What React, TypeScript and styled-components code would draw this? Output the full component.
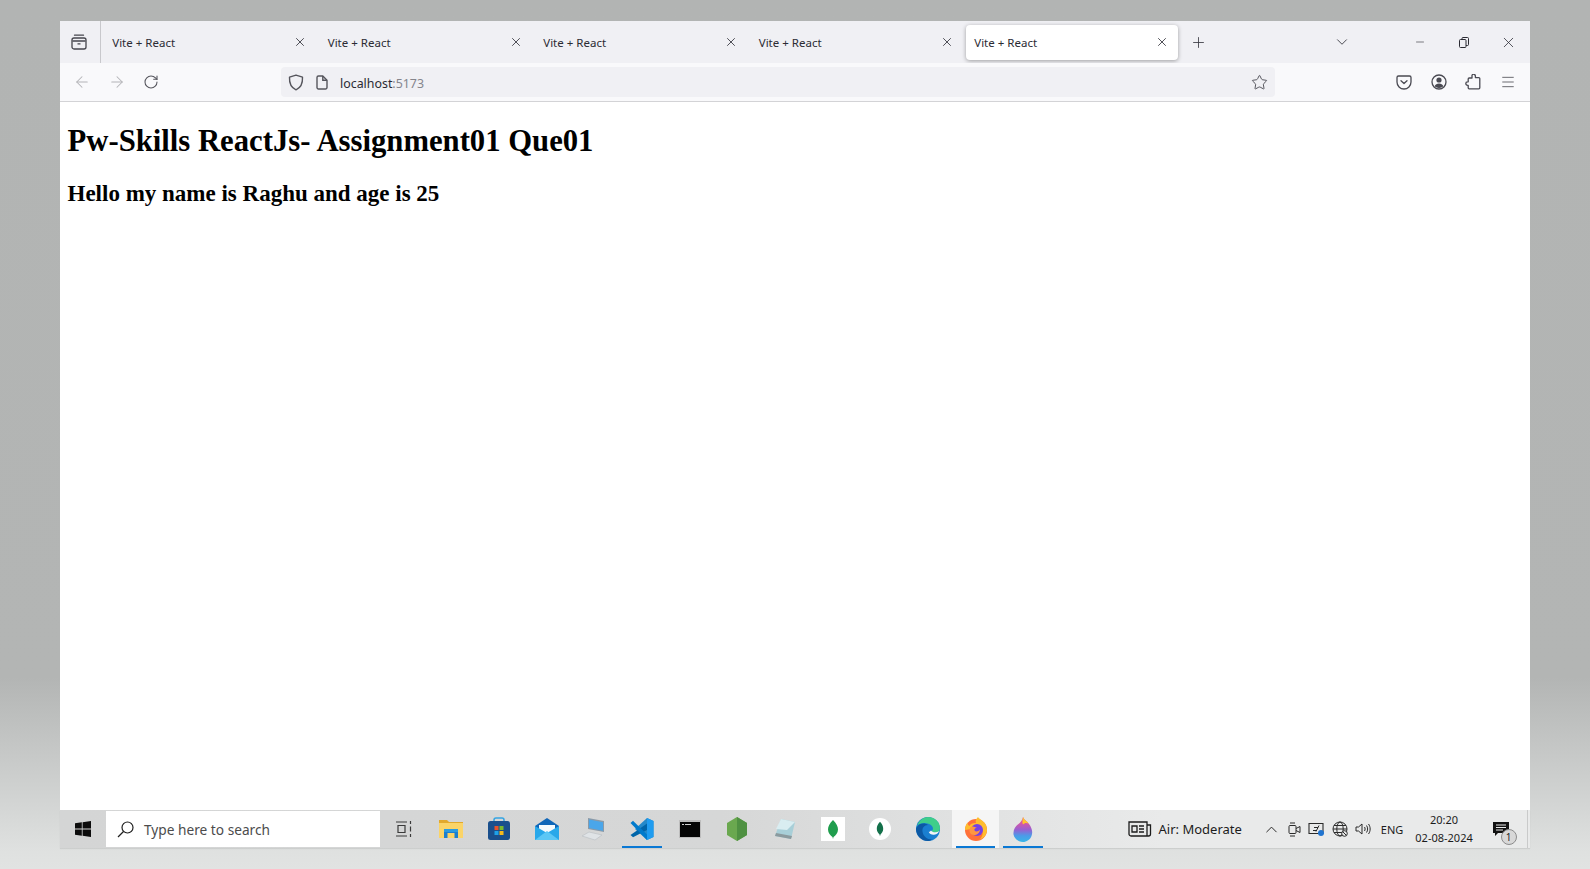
import React from "react";
import styled, { createGlobalStyle } from "styled-components";
import {
  ArrowLeft,
  ArrowRight,
  ChevronDown,
  ChevronUp,
  Menu,
  Minus,
  Plus,
  RotateCw,
  Star,
  X
} from "lucide-react";

const GlobalStyle = createGlobalStyle`
  html, body {
    margin: 0;
    height: 869px;
    overflow: hidden;
  }
  body {
    background: linear-gradient(180deg, #b2b4b3 0%, #b3b5b4 78%, #dfe1e0 98%, #e1e3e2 100%);
    font-family: "Noto Sans", "Open Sans", sans-serif;
  }
`;

const TABS = ["Vite + React", "Vite + React", "Vite + React", "Vite + React", "Vite + React"];

function ArchiveIcon() {
  return (
    <svg width="16" height="16" viewBox="0 0 16 16" fill="none" stroke="#45454d" strokeWidth="1.3">
      <path d="M3.5 1.2h9" strokeLinecap="round" />
      <rect x="1" y="4" width="14" height="11" rx="2" />
      <path d="M1.5 7h13M6.5 9.8h3" />
    </svg>
  );
}

function ShieldIcon() {
  return (
    <svg width="16" height="17" viewBox="0 0 16 17" fill="none" stroke="#55555c" strokeWidth="1.4">
      <path d="M8 1.2 L14.5 3.2 C14.8 9 13 13.5 8 15.8 C3 13.5 1.2 9 1.5 3.2 Z" strokeLinejoin="round" />
    </svg>
  );
}

function PageIcon() {
  return (
    <svg width="14" height="15" viewBox="0 0 14 15" fill="none" stroke="#55555c" strokeWidth="1.4">
      <path d="M2 2.5a1.5 1.5 0 0 1 1.5-1.5h4.3L12 5.2v7.3a1.5 1.5 0 0 1-1.5 1.5h-7A1.5 1.5 0 0 1 2 12.5z" strokeLinejoin="round" />
      <path d="M7.8 1v4.2H12" />
    </svg>
  );
}

function PocketIcon() {
  return (
    <svg width="16" height="16" viewBox="0 0 16 16" fill="none" stroke="#4a4a52" strokeWidth="1.3">
      <path d="M2.5 2h11A1.5 1.5 0 0 1 15 3.5V8A7 7 0 0 1 1 8V3.5A1.5 1.5 0 0 1 2.5 2z" />
      <path d="M5 6.8 8 9.6l3-2.8" strokeLinecap="round" strokeLinejoin="round" />
    </svg>
  );
}

function ProfileIcon() {
  return (
    <svg width="16" height="16" viewBox="0 0 16 16" fill="none">
      <circle cx="8" cy="8" r="7" stroke="#4a4a52" strokeWidth="1.3" />
      <circle cx="8" cy="6" r="2.6" fill="#4a4a52" />
      <path d="M3.6 12.2c.8-2 2.4-2.8 4.4-2.8s3.6.8 4.4 2.8A6 6 0 0 1 8 14a6 6 0 0 1-4.4-1.8z" fill="#4a4a52" />
    </svg>
  );
}

function ExtensionIcon() {
  return (
    <svg width="16" height="16" viewBox="0 0 16 16" fill="none" stroke="#4a4a52" strokeWidth="1.3" strokeLinejoin="round">
      <path d="M7 1.2a1.8 1.8 0 0 1 3.4.8v1.6h3.4a1 1 0 0 1 1 1v9.2a1 1 0 0 1-1 1H4.2a1 1 0 0 1-1-1v-2.4H2.6a1.8 1.8 0 0 1 0-3.6h.6V5a1 1 0 0 1 1-1H7z" />
    </svg>
  );
}

function RestoreIcon() {
  return (
    <svg width="10" height="11" viewBox="0 0 10 11" fill="none" stroke="#2b2b33" strokeWidth="1">
      <rect x="0.5" y="2.5" width="6.5" height="8" rx="1" />
      <path d="M3 2.5v-1a1 1 0 0 1 1-1h4.5a1 1 0 0 1 1 1v6a1 1 0 0 1-1 1H7" />
    </svg>
  );
}

function WindowsLogo() {
  return (
    <svg width="16" height="16" viewBox="0 0 16 16" fill="#0c0c0c">
      <path d="M0 2.3 6.8 1.3v6.3H0zM7.6 1.2 16 0v7.6H7.6zM0 8.4h6.8v6.3L0 13.7zM7.6 8.4H16V16l-8.4-1.2z" />
    </svg>
  );
}

function SearchGlass() {
  return (
    <svg width="17" height="17" viewBox="0 0 17 17" fill="none" stroke="#1f1f1f" strokeWidth="1.2">
      <circle cx="10.5" cy="6.5" r="5.5" />
      <path d="M6.5 10.5 1 16" />
    </svg>
  );
}

function TaskViewIcon() {
  return (
    <svg width="17" height="16" viewBox="0 0 17 16" fill="none" stroke="#3a3a3a" strokeWidth="1.2">
      <path d="M1 1h11M1 15h11M3 4.5h7v7H3zM15.5 0v3M15.5 5.5v5M15.5 13v3" />
    </svg>
  );
}

function FolderIcon() {
  return (
    <svg width="24" height="22" viewBox="0 0 24 22">
      <path d="M0 2h8l2 2h14v2H0z" fill="#e2a92d" />
      <path d="M0 5h24v15H0z" fill="#fbd468" />
      <path d="M5 11h14v9h-3.5v-5h-7v5H5z" fill="#1b7fcf" />
      <path d="M5 11h14v3H5z" fill="#2a9be0" />
    </svg>
  );
}

function StoreIcon() {
  return (
    <svg width="24" height="24" viewBox="0 0 24 24">
      <path d="M7 5V3a2 2 0 0 1 2-2h6a2 2 0 0 1 2 2v2" stroke="#35a5e3" strokeWidth="1.5" fill="none" />
      <rect x="1" y="4" width="22" height="19" rx="2.5" fill="#1a4f8c" />
      <rect x="7.5" y="9" width="4" height="4" fill="#e8532a" />
      <rect x="12.5" y="9" width="4" height="4" fill="#7ab92d" />
      <rect x="7.5" y="14" width="4" height="4" fill="#1ea1e8" />
      <rect x="12.5" y="14" width="4" height="4" fill="#f7b91b" />
    </svg>
  );
}

function MailIcon() {
  return (
    <svg width="24" height="22" viewBox="0 0 24 22">
      <path d="M0 8 12 0l12 8v14H0z" fill="#0f66b8" />
      <path d="M4 7h16v8H4z" fill="#f5fafd" />
      <path d="M0 8l12 7 12-7v14H0z" fill="#28a8ea" />
      <path d="M0 22 12 13l12 9z" fill="#5cc7f5" />
    </svg>
  );
}

function ComputerIcon() {
  return (
    <svg width="24" height="24" viewBox="0 0 24 24">
      <path d="M6 1l16 3v11L6 12z" fill="#8a9aa8" />
      <path d="M7 2.5l14 2.7v8.5L7 11z" fill="#4aa6ea" />
      <path d="M0 19l7-4 13 3-7 5z" fill="#dfe3e6" stroke="#b9bec2" strokeWidth="0.6" />
    </svg>
  );
}

function CodeIcon() {
  return (
    <svg width="24" height="24" viewBox="0 0 24 24">
      <path d="M17 1 23.5 4v16L17 23 5 12z" fill="#2489ca" />
      <path d="M17 1v22l6.5-3V4z" fill="#1f9cf0" />
      <path d="M17 6.5 0.5 18 3 20.2 17 13z" fill="#0065a9" />
      <path d="M0.5 6 3 3.8 17 17.5V23z" fill="#007acc" />
    </svg>
  );
}

function TerminalIcon() {
  return (
    <svg width="22" height="18" viewBox="0 0 22 18">
      <rect x="0" y="0" width="22" height="18" fill="#bdbdbd" />
      <rect x="1" y="2" width="20" height="15" fill="#050505" />
      <path d="M3 4h2v1H3zM6 4h6v1H6z" fill="#cfcfcf" />
    </svg>
  );
}

function NodeIcon() {
  return (
    <svg width="22" height="24" viewBox="0 0 22 24">
      <path d="M11 0 21 6v12l-10 6L1 18V6z" fill="#6aa84f" />
      <path d="M11 0 21 6v12l-10 6z" fill="#4f9142" />
    </svg>
  );
}

function PaperIcon() {
  return (
    <svg width="24" height="24" viewBox="0 0 24 24">
      <path d="M8 2 22 5 18 22 2 19z" fill="#a8cfd8" />
      <path d="M8 2 22 5 14 13 3 12z" fill="#d9edf1" />
      <path d="M2 19l16 3 1-3-16-3z" fill="#8b9a9e" />
    </svg>
  );
}

function MongoSquareIcon() {
  return (
    <svg width="24" height="24" viewBox="0 0 24 24">
      <rect width="24" height="24" fill="#fff" />
      <path d="M12 3c3.5 3.5 5 6.5 5 9.5 0 3.5-2.5 6-4.5 7.5L12 22l-.5-2C9.5 18.5 7 16 7 12.5 7 9.5 8.5 6.5 12 3z" fill="#1f9d4d" />
    </svg>
  );
}

function MongoRoundIcon() {
  return (
    <svg width="22" height="22" viewBox="0 0 24 24">
      <circle cx="12" cy="12" r="12" fill="#fff" />
      <path d="M12 4c2.5 2.6 3.5 5 3.5 8 0 2.8-1.8 5-3 6l-.5 2-.5-2c-1.2-1-3-3.2-3-6 0-3 1-5.4 3.5-8z" fill="#13704a" />
    </svg>
  );
}

function EdgeIcon() {
  return (
    <svg width="24" height="24" viewBox="0 0 24 24">
      <circle cx="12" cy="12" r="12" fill="#1a7fd0" />
      <path d="M1 9C3 3 8 0 12 0c6 0 12 4.5 12 11 0 3-2 4.5-4.5 4.5-2 0-3.5-.8-4-1.5 2-1 2-3.5 0-5.5C13 6 5 4.5 1 9z" fill="#3fce8a" />
      <path d="M1 10c2-4 8-4.5 11-2-4 0-6 3-5.5 6.5C7 19 11 22.5 16 22.5 14.5 23.5 13 24 12 24 5 24 0 18 0 12c0-.6.5-1.5 1-2z" fill="#0c59a4" />
      <path d="M15 13.5c1.5 2 5 2.5 8.5.5-1 1-2 3.5-5.500 3.800-2.500.2-4.800-1-5.300-3 .6.3 1.500-.3 2.300-1.300z" fill="#f4f6f6" />
    </svg>
  );
}

function FirefoxIcon() {
  return (
    <svg width="24" height="24" viewBox="0 0 24 24">
      <circle cx="12" cy="13" r="11" fill="#ff7139" />
      <path d="M1 13c0-3 1-5.5 2.5-7.5 0 2 1 3 2 3.5C7 6 10 6 12 6c-1-2 0-4 2-6 1 2 6 4 8 8 1 3 1 5 1 5 0 3-2 8-8 10 4-3 5-9 2-12.500z" fill="#ffbd2e" />
      <circle cx="13" cy="13" r="6" fill="#7542e5" />
      <path d="M6 11c2-3 5-1 7 0-3 0-3 2-2 3s5 0 5-2c0 4-3 6-6 6-3.5 0-5.5-3-4-7z" fill="#ff9640" />
    </svg>
  );
}

function FlameIcon() {
  return (
    <svg width="20" height="25" viewBox="0 0 20 25">
      <defs>
        <linearGradient id="flameBody" x1="0" y1="0" x2="0" y2="1">
          <stop offset="0.2" stopColor="#e0569f" />
          <stop offset="0.5" stopColor="#9a5fd0" />
          <stop offset="0.75" stopColor="#4b9be8" />
          <stop offset="1" stopColor="#38b6e8" />
        </linearGradient>
      </defs>
      <path d="M10 0c1 3 4 4 6 7 3 4 4 8 2.5 12-1.2 3.5-5 6-8.500 6C5.500 25 1.500 22 .5 17.500 0 13 2.500 9 5.500 7 7.500 5.500 9.500 3 10 0z" fill="url(#flameBody)" />
      <path d="M10 0c1 3 4 4 5.500 6.500-2-1-4.500-.5-5.500 1-1-1.500-.5-4.500 0-7.500z" fill="#ffc62e" />
    </svg>
  );
}

function NewsIcon() {
  return (
    <svg width="24" height="16" viewBox="0 0 24 16" fill="none" stroke="#1c1c1c" strokeWidth="1.3">
      <path d="M1 1h18v14H3a2 2 0 0 1-2-2zM19 4h3.5v9a2 2 0 0 1-2 2H19" />
      <path d="M4 5h5v6H4zM11 5h5M11 8h5M11 11h5" />
    </svg>
  );
}

function MeetIcon() {
  return (
    <svg width="13" height="15" viewBox="0 0 13 15" fill="none" stroke="#2a2a2a" strokeWidth="1">
      <rect x="1" y="3.5" width="7" height="8" rx="1" />
      <path d="M8 6.5l4-2v6l-4-2M2 1h5M2 14h5" />
    </svg>
  );
}

function ScreenIcon() {
  return (
    <svg width="17" height="16" viewBox="0 0 17 16">
      <path d="M1 2.5h14v10H1z" fill="none" stroke="#2a2a2a" strokeWidth="1.1" />
      <path d="M6 6.5h4M8 9.5H5M11 4.5l-3 6" stroke="#2a2a2a" strokeWidth="1" />
      <circle cx="13" cy="12" r="3" fill="#1f74d0" />
    </svg>
  );
}

function GlobeIcon() {
  return (
    <svg width="16" height="16" viewBox="0 0 16 16" fill="none" stroke="#2a2a2a" strokeWidth="1">
      <circle cx="8" cy="8" r="7" />
      <ellipse cx="8" cy="8" rx="3.2" ry="7" />
      <path d="M1 8h14M2 4.5h12M2 11.5h12" />
      <circle cx="12.5" cy="12.5" r="2.8" fill="#e8e9e9" />
      <path d="M10.8 10.8l3.4 3.4" />
    </svg>
  );
}

function SpeakerIcon() {
  return (
    <svg width="16" height="14" viewBox="0 0 16 14" fill="none" stroke="#2a2a2a" strokeWidth="1">
      <path d="M1 5h2.5L7 2v10L3.5 9H1zM9.500 5c.8 1.2.8 2.8 0 4M11.500 3.500c1.500 2 1.500 5 0 7M13.500 2c2.200 3 2.200 7 0 10" />
    </svg>
  );
}

function NotificationIcon() {
  return (
    <svg width="16" height="15" viewBox="0 0 16 15">
      <path d="M0 0h16v11H5l-3 3v-3H0z" fill="#111" />
      <path d="M3 3h10M3 5.5h10M3 8h7" stroke="#e8e9e9" strokeWidth="1" />
    </svg>
  );
}

const PINNED: { key: string; icon: React.ReactNode; open?: boolean; focused?: boolean }[] = [
  { key: "taskview", icon: <TaskViewIcon /> },
  { key: "folder", icon: <FolderIcon /> },
  { key: "store", icon: <StoreIcon /> },
  { key: "mail", icon: <MailIcon /> },
  { key: "pc", icon: <ComputerIcon /> },
  { key: "code", icon: <CodeIcon />, open: true },
  { key: "terminal", icon: <TerminalIcon /> },
  { key: "node", icon: <NodeIcon /> },
  { key: "paper", icon: <PaperIcon /> },
  { key: "mongo", icon: <MongoSquareIcon /> },
  { key: "mongo2", icon: <MongoRoundIcon /> },
  { key: "edge", icon: <EdgeIcon /> },
  { key: "firefox", icon: <FirefoxIcon />, open: true, focused: true },
  { key: "flame", icon: <FlameIcon />, open: true }
];

export default function App() {
  return (
    <Desktop>
      <GlobalStyle />
      <Browser>
        <TabStrip>
          <SideButton>
            <ArchiveIcon />
          </SideButton>
          {TABS.map((t, i) => (
            <Tab key={i} $active={i === 4}>
              <TabLabel>{t}</TabLabel>
              <X size={14} strokeWidth={1.4} color="#2b2b33" />
            </Tab>
          ))}
          <NewTab>
            <Plus size={17} strokeWidth={1.2} color="#3a3a42" />
          </NewTab>
          <TabList>
            <ChevronDown size={18} strokeWidth={1.2} color="#3a3a42" />
          </TabList>
          <WindowControl>
            <Minus size={12} strokeWidth={1.2} color="#2b2b33" />
          </WindowControl>
          <WindowControl>
            <RestoreIcon />
          </WindowControl>
          <WindowControl>
            <X size={17} strokeWidth={1.1} color="#2b2b33" />
          </WindowControl>
        </TabStrip>
        <NavBar>
          <NavButton>
            <ArrowLeft size={18} strokeWidth={1.4} color="#b4b4b8" />
          </NavButton>
          <NavButton>
            <ArrowRight size={18} strokeWidth={1.4} color="#b4b4b8" />
          </NavButton>
          <NavButton>
            <RotateCw size={16} strokeWidth={1.6} color="#55555c" />
          </NavButton>
          <UrlBar>
            <ShieldIcon />
            <PageIcon />
            <UrlText>
              localhost<UrlPort>:5173</UrlPort>
            </UrlText>
            <UrlStar>
              <Star size={17} strokeWidth={1.3} color="#4a4a52" />
            </UrlStar>
          </UrlBar>
          <ToolButtons>
            <NavButton>
              <PocketIcon />
            </NavButton>
            <NavButton>
              <ProfileIcon />
            </NavButton>
            <NavButton>
              <ExtensionIcon />
            </NavButton>
            <NavButton>
              <Menu size={16} strokeWidth={1.3} color="#55555c" />
            </NavButton>
          </ToolButtons>
        </NavBar>
        <Page>
          <Heading>Pw-Skills ReactJs- Assignment01 Que01</Heading>
          <SubHeading>Hello my name is Raghu and age is 25</SubHeading>
        </Page>
        <Taskbar>
          <StartButton>
            <WindowsLogo />
          </StartButton>
          <SearchBox>
            <SearchGlass />
            <SearchHint>Type here to search</SearchHint>
          </SearchBox>
          <AppRow>
            {PINNED.map(p => (
              <AppSlot key={p.key} $open={p.open} $focused={p.focused}>
                {p.icon}
              </AppSlot>
            ))}
          </AppRow>
          <Tray>
            <NewsIcon />
            <AirText>Air: Moderate</AirText>
            <TrayIcons>
              <ChevronUp size={19} strokeWidth={1.2} color="#222" />
              <MeetIcon />
              <ScreenIcon />
              <GlobeIcon />
              <SpeakerIcon />
            </TrayIcons>
            <Lang>ENG</Lang>
            <Clock>
              <span>20:20</span>
              <span>02-08-2024</span>
            </Clock>
            <Notify>
              <NotificationIcon />
              <NotifyBadge>1</NotifyBadge>
            </Notify>
            <PeekLine />
          </Tray>
        </Taskbar>
      </Browser>
    </Desktop>
  );
}

const Desktop = styled.div`
  height: 869px;
  box-sizing: border-box;
  padding: 21px 60px 21px;
`;

const Browser = styled.div`
  height: 827px;
  display: flex;
  flex-direction: column;
`;

const TabStrip = styled.div`
  height: 42px;
  flex: none;
  display: flex;
  align-items: center;
  background: #f0f0f4;
`;

const SideButton = styled.div`
  width: 37px;
  height: 42px;
  flex: none;
  margin-right: 1.5px;
  padding-right: 3px;
  display: flex;
  align-items: center;
  justify-content: center;
  border-right: 1px solid #c8c8cc;
`;

const Tab = styled.div<{ $active?: boolean }>`
  width: 212px;
  height: 35px;
  flex: none;
  margin: 0 1.75px;
  padding: 0 9px 0 8px;
  box-sizing: border-box;
  display: flex;
  align-items: center;
  justify-content: space-between;
  border-radius: 4px;
  background: ${p => (p.$active ? "#fff" : "transparent")};
  box-shadow: ${p => (p.$active ? "0 1px 4px rgba(0, 0, 0, 0.35)" : "none")};
`;

const TabLabel = styled.span`
  font-size: 11.5px;
  color: #2b2b33;
`;

const NewTab = styled.div`
  width: 34px;
  height: 34px;
  flex: none;
  margin-left: 1.5px;
  display: flex;
  align-items: center;
  justify-content: center;
`;

const TabList = styled.div`
  width: 34px;
  margin-left: auto;
  margin-right: 39px;
  display: flex;
  justify-content: center;
`;

const WindowControl = styled.div`
  width: 44px;
  flex: none;
  display: flex;
  justify-content: center;
`;

const NavBar = styled.div`
  height: 38px;
  flex: none;
  display: flex;
  align-items: center;
  padding-left: 5px;
  background: #f9f9fb;
  border-bottom: 1px solid #d3d3d6;
`;

const NavButton = styled.div`
  width: 34.5px;
  height: 30px;
  flex: none;
  display: flex;
  align-items: center;
  justify-content: center;
`;

const UrlBar = styled.div`
  width: 994px;
  height: 30px;
  margin-left: 112.5px;
  flex: none;
  box-sizing: border-box;
  padding: 0 6px 0 7px;
  display: flex;
  align-items: center;
  gap: 11px;
  background: #f0f0f4;
  border-radius: 4px;
`;

const UrlText = styled.span`
  font-size: 12.4px;
  line-height: 30px;
  padding-top: 3px;
  color: #2b2b33;
`;

const UrlPort = styled.span`
  color: #85858c;
`;

const UrlStar = styled.span`
  margin-left: auto;
  display: flex;
  width: 20px;
  justify-content: center;
`;

const ToolButtons = styled.div`
  display: flex;
  margin-left: 112px;
`;

const Page = styled.div`
  flex: 1;
  background: #fff;
  padding: 8px 8px 8px 7.5px;
  font-family: "Liberation Serif", "Times New Roman", serif;
  color: #000;
`;

const Heading = styled.h1`
  margin: 13px 0 20px;
  font-size: 30.7px;
  line-height: 37px;
  font-weight: bold;
`;

const SubHeading = styled.h2`
  margin: 0;
  font-size: 23px;
  line-height: 27px;
  font-weight: bold;
`;

const Taskbar = styled.div`
  height: 38px;
  flex: none;
  display: flex;
  align-items: stretch;
  background: linear-gradient(90deg, #d4d5d5 0%, #d6d7d7 45%, #e9eaea 75%, #e9eaea 100%);
  box-shadow: 0 1px 1px rgba(0, 0, 0, 0.08);
`;

const StartButton = styled.div`
  width: 46px;
  flex: none;
  display: flex;
  align-items: center;
  justify-content: center;
`;

const SearchBox = styled.div`
  width: 274px;
  flex: none;
  box-sizing: border-box;
  margin: 1px 0;
  padding-left: 11px;
  display: flex;
  align-items: center;
  gap: 10px;
  background: #fff;
`;

const SearchHint = styled.span`
  font-size: 13.7px;
  color: #4c4c4c;
`;

const AppRow = styled.div`
  width: 669px;
  flex: none;
  display: flex;
  align-items: stretch;
`;

const AppSlot = styled.div<{ $open?: boolean; $focused?: boolean }>`
  width: 47.65px;
  flex: none;
  display: flex;
  align-items: center;
  justify-content: center;
  position: relative;
  background: ${p => (p.$focused ? "#f5f5f5" : "transparent")};
  &::after {
    content: "";
    display: ${p => (p.$open ? "block" : "none")};
    position: absolute;
    left: 4px;
    right: 4px;
    bottom: 0;
    height: 2px;
    background: #0a78d4;
  }
`;

const Tray = styled.div`
  flex: 1;
  display: flex;
  align-items: center;
  padding-left: 78.5px;
  color: #1c1c1c;
`;

const AirText = styled.span`
  margin-left: 7px;
  font-size: 13px;
  white-space: nowrap;
`;

const TrayIcons = styled.div`
  display: flex;
  align-items: center;
  gap: 7px;
  margin-left: 20px;
`;

const Lang = styled.span`
  margin-left: 10px;
  font-size: 11px;
`;

const Clock = styled.div`
  margin-left: 12px;
  display: flex;
  flex-direction: column;
  align-items: center;
  font-size: 11px;
  line-height: 18px;
  white-space: nowrap;
`;

const Notify = styled.div`
  margin-left: 20px;
  position: relative;
  display: flex;
`;

const NotifyBadge = styled.span`
  position: absolute;
  left: 8px;
  top: 7px;
  width: 14px;
  height: 14px;
  border-radius: 50%;
  border: 1px solid #8c8c8c;
  background: #d8d8d8;
  font-size: 10px;
  line-height: 14px;
  text-align: center;
`;

const PeekLine = styled.div`
  margin-left: auto;
  margin-right: 2px;
  width: 1px;
  align-self: stretch;
  background: #c9caca;
`;
